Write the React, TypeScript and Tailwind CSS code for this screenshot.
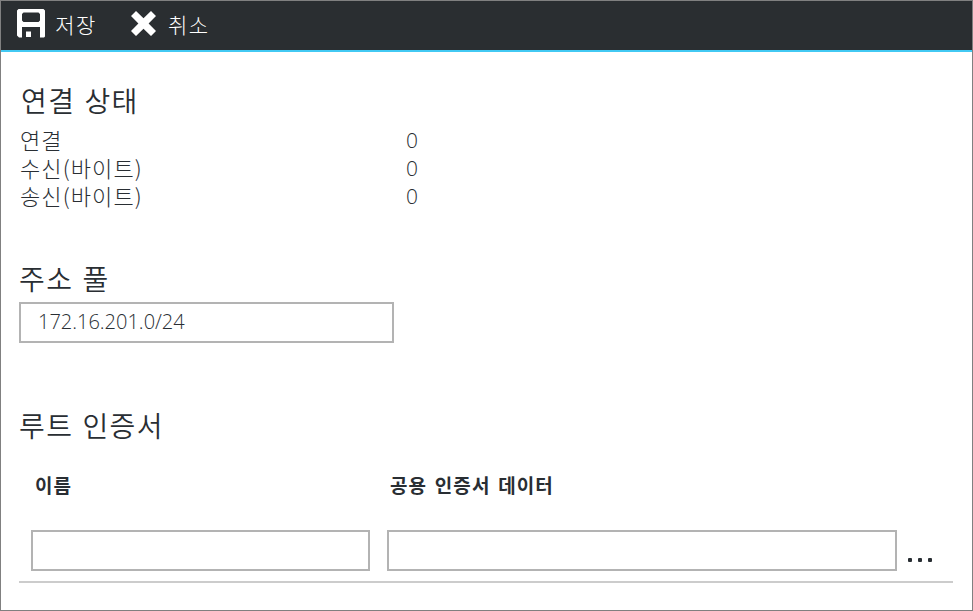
import type { ReactNode } from "react";

const stats = [
  { label: "연결", value: "0" },
  { label: "수신(바이트)", value: "0" },
  { label: "송신(바이트)", value: "0" },
];

function SaveIcon() {
  return (
    <svg width="28" height="29" viewBox="0 0 28 29" fill="#ffffff">
      <path
        fillRule="evenodd"
        d="M1.500 0H26.500L28 1.500V27.500L27 28.500H23V18H5V28.500H2L0 26.500V1.500ZM6.500 3.500L5 5V11.500L6.500 13H21.500L23 11.500V5L21.500 3.500Z"
      />
      <path d="M9 22.500H14V28H9Z" />
    </svg>
  );
}

function CancelIcon() {
  return (
    <svg width="25" height="25" viewBox="0 0 25 25" fill="#ffffff">
      <path d="M5 0L12.500 7.300L20 0L25 5L17.600 12.500L25 20L20 25L12.500 17.700L5 25L0 20L7.400 12.500L0 5Z" />
    </svg>
  );
}

function Heading({ children }: { children: ReactNode }) {
  return (
    <h2 className="text-[28px] leading-10 font-[350] tracking-[1.4px] [word-spacing:1.5px] whitespace-nowrap">
      {children}
    </h2>
  );
}

export default function App() {
  return (
    <div className="flex h-[611px] w-[973px] flex-col overflow-hidden border border-[#808080] bg-white font-['Noto_Sans_CJK_KR',sans-serif] text-[#292e33]">
      <header className="flex h-[51px] shrink-0 items-start border-b-2 border-[#42c9f3] bg-[#2a2e31] text-[21px] leading-[30px] font-light tracking-[1.4px] text-white">
        <button className="mt-2 ml-4 flex">
          <SaveIcon />
          <span className="ml-[10px] w-[42px]">저장</span>
        </button>
        <button className="mt-2 ml-[34px] flex">
          <span className="mt-[2px]">
            <CancelIcon />
          </span>
          <span className="ml-3">취소</span>
        </button>
      </header>
      <main className="flex flex-col pl-[18px]">
        <section className="mt-7 h-[178px]">
          <div className="pl-[2px]">
            <Heading>연결 상태</Heading>
          </div>
          <dl className="mt-[5px] text-[22px] leading-7 font-light">
            {stats.map((s) => (
              <div key={s.label} className="flex h-7">
                <dt className="w-[387px] pl-px tracking-[1.1px]">{s.label}</dt>
                <dd className="pt-px font-['Open_Sans',sans-serif] text-[21px] leading-7 font-light">{s.value}</dd>
              </div>
            ))}
          </dl>
        </section>
        <section className="h-[147px]">
          <Heading>주소 풀</Heading>
          <input
            className="mt-1 block h-[41px] w-[375px] border-2 border-[#b3b3b3] px-[17px] pb-[2px] font-['Open_Sans',sans-serif] text-[20px] font-light outline-none"
            defaultValue="172.16.201.0/24"
          />
        </section>
        <section>
          <Heading>루트 인증서</Heading>
          <div className="mt-6 flex h-8 text-[19px] leading-8 font-bold tracking-[1.1px] [word-spacing:2.2px]">
            <span className="ml-4 w-[355px]">이름</span>
            <span>공용 인증서 데이터</span>
          </div>
          <div className="mt-[29px] flex h-[53px] w-[934px] border-b-2 border-[#cccccc] pl-3">
            <input className="h-[41px] w-[339px] border-2 border-[#b3b3b3] px-4 outline-none" />
            <input className="ml-[17px] h-[41px] w-[510px] border-2 border-[#b3b3b3] px-4 outline-none" />
            <button className="mt-7 ml-[11px] flex h-1 gap-[6px]" aria-label="더 보기">
              <i className="size-1 rounded-[1px] bg-[#292e33]" />
              <i className="size-1 rounded-[1px] bg-[#292e33]" />
              <i className="size-1 rounded-[1px] bg-[#292e33]" />
            </button>
          </div>
        </section>
      </main>
    </div>
  );
}
